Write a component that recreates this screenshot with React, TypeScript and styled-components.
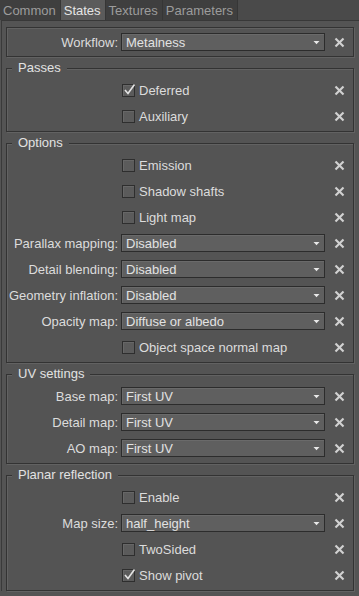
import React from 'react';
import styled, { createGlobalStyle } from 'styled-components';

const GlobalStyle = createGlobalStyle`
    html, body {
        margin: 0;
        padding: 0;
        background: #545454;
    }
    body {
        font-family: "Liberation Sans", Arial, sans-serif;
        font-size: 13px;
        color: #dedede;
    }
`;

const Page = styled.div`
    width: 359px;
    height: 596px;
    overflow: hidden;
    background: #545454;
`;

const TabBar = styled.div`
    display: flex;
    height: 20px;
    background: #4a4a4a;
`;

const Tab = styled.div<{ $active?: boolean }>`
    display: flex;
    align-items: center;
    padding: 0 4px 0 3px;
    height: 20px;
    box-sizing: border-box;
    border-right: 1px solid #363636;
    background: ${({ $active }) => ($active ? '#5b5b5b' : '#3f3f3f')};
    color: ${({ $active }) => ($active ? '#e6e6e6' : '#9c9c9c')};
    white-space: nowrap;
`;

const Pane = styled.div`
    margin-left: 1px;
    border-top: 1px solid #383838;
    border-left: 1px solid #3a3a3a;
    padding: 6px 5px 0 4px;
    display: flex;
    flex-direction: column;
    gap: 11px;
`;

const Group = styled.div<{ $titled?: boolean }>`
    position: relative;
    border: 1px solid #333333;
    box-shadow: inset 1px 1px 0 #626262, 1px 1px 0 #626262;
    padding: ${({ $titled }) => ($titled ? '8px 0 2px' : '1px 0 1px')};
`;

const GroupTitle = styled.div`
    position: absolute;
    top: -9px;
    left: 5px;
    padding: 0 6px 0 6px;
    background: #545454;
    line-height: 16px;
    color: #e2e2e2;
`;

const Row = styled.div`
    display: grid;
    grid-template-columns: 112px 1fr 28px;
    align-items: center;
    height: 26px;
`;

const Label = styled.div`
    text-align: right;
    white-space: nowrap;
    padding-right: 1px;
    color: #dcdcdc;
`;

const Combo = styled.div`
    margin-left: 2px;
    height: 18px;
    box-sizing: border-box;
    border: 1px solid #2c2c2c;
    background: #5f5f5f;
    box-shadow: inset 1px 1px 0 #6a6a6a;
    display: flex;
    align-items: center;
    justify-content: space-between;
    padding: 0 4px 0 4px;
    color: #e2e2e2;
`;

const CheckField = styled.label`
    margin-left: 3px;
    display: flex;
    align-items: center;
    gap: 4px;
    color: #dcdcdc;
    white-space: nowrap;
`;

const Box = styled.span`
    position: relative;
    width: 13px;
    height: 13px;
    box-sizing: border-box;
    border: 1px solid #2e2e2e;
    background: #5b5b5b;
    box-shadow: inset 1px 1px 0 #676767;
    display: inline-flex;
    align-items: center;
    justify-content: center;
`;

const ResetCell = styled.div`
    display: flex;
    align-items: center;
    justify-content: center;
    color: #d2d2d2;
`;

type RowData =
    | { kind: 'combo'; label: string; value: string }
    | { kind: 'check'; text: string; checked?: boolean };

type GroupData = { title?: string; rows: RowData[] };

const groups: GroupData[] = [
    { rows: [{ kind: 'combo', label: 'Workflow:', value: 'Metalness' }] },
    {
        title: 'Passes',
        rows: [
            { kind: 'check', text: 'Deferred', checked: true },
            { kind: 'check', text: 'Auxiliary' },
        ],
    },
    {
        title: 'Options',
        rows: [
            { kind: 'check', text: 'Emission' },
            { kind: 'check', text: 'Shadow shafts' },
            { kind: 'check', text: 'Light map' },
            { kind: 'combo', label: 'Parallax mapping:', value: 'Disabled' },
            { kind: 'combo', label: 'Detail blending:', value: 'Disabled' },
            { kind: 'combo', label: 'Geometry inflation:', value: 'Disabled' },
            { kind: 'combo', label: 'Opacity map:', value: 'Diffuse or albedo' },
            { kind: 'check', text: 'Object space normal map' },
        ],
    },
    {
        title: 'UV settings',
        rows: [
            { kind: 'combo', label: 'Base map:', value: 'First UV' },
            { kind: 'combo', label: 'Detail map:', value: 'First UV' },
            { kind: 'combo', label: 'AO map:', value: 'First UV' },
        ],
    },
    {
        title: 'Planar reflection',
        rows: [
            { kind: 'check', text: 'Enable' },
            { kind: 'combo', label: 'Map size:', value: 'half_height' },
            { kind: 'check', text: 'TwoSided' },
            { kind: 'check', text: 'Show pivot', checked: true },
        ],
    },
];

const ArrowIcon = () => (
    <svg width="7" height="5" viewBox="0 0 7 5">
        <path d="M0.5 1 L6.5 1 L3.5 4.2 Z" fill="#e8e8e8" />
    </svg>
);

// check mark pokes slightly out of the box, as in the editor
const CheckMark = () => (
    <svg width="13" height="13" viewBox="0 0 13 13" style={{ position: 'absolute', left: 0, top: -2 }}>
        <path d="M2 7 L5 10.5 L11.5 1.5" fill="none" stroke="#e4e4e4" strokeWidth="1.6" />
    </svg>
);

// light "reset" cross
const ResetIcon = () => (
    <svg width="11" height="11" viewBox="0 0 11 11" fill="none">
        <line x1="1.5" y1="1.5" x2="9.5" y2="9.5" stroke="currentColor" strokeWidth="2.2" />
        <line x1="9.5" y1="1.5" x2="1.5" y2="9.5" stroke="currentColor" strokeWidth="2.2" />
    </svg>
);

const PropertyRow: React.FC<{ row: RowData }> = ({ row }) => (
    <Row>
        {row.kind === 'combo' ? (
            <>
                <Label>{row.label}</Label>
                <Combo>
                    <span>{row.value}</span>
                    <ArrowIcon />
                </Combo>
            </>
        ) : (
            <>
                <Label />
                <CheckField>
                    <Box>{row.checked && <CheckMark />}</Box>
                    {row.text}
                </CheckField>
            </>
        )}
        <ResetCell>
            <ResetIcon />
        </ResetCell>
    </Row>
);

const App: React.FC = () => {
    const tabs = ['Common', 'States', 'Textures', 'Parameters'];

    return (
        <Page>
            <GlobalStyle />
            <TabBar>
                {tabs.map((t) => (
                    <Tab key={t} $active={t === 'States'}>
                        {t}
                    </Tab>
                ))}
            </TabBar>
            <Pane>
                {groups.map((g, i) => (
                    <Group key={i} $titled={!!g.title}>
                        {g.title && <GroupTitle>{g.title}</GroupTitle>}
                        {g.rows.map((r, j) => (
                            <PropertyRow key={j} row={r} />
                        ))}
                    </Group>
                ))}
            </Pane>
        </Page>
    );
};

export default App;
